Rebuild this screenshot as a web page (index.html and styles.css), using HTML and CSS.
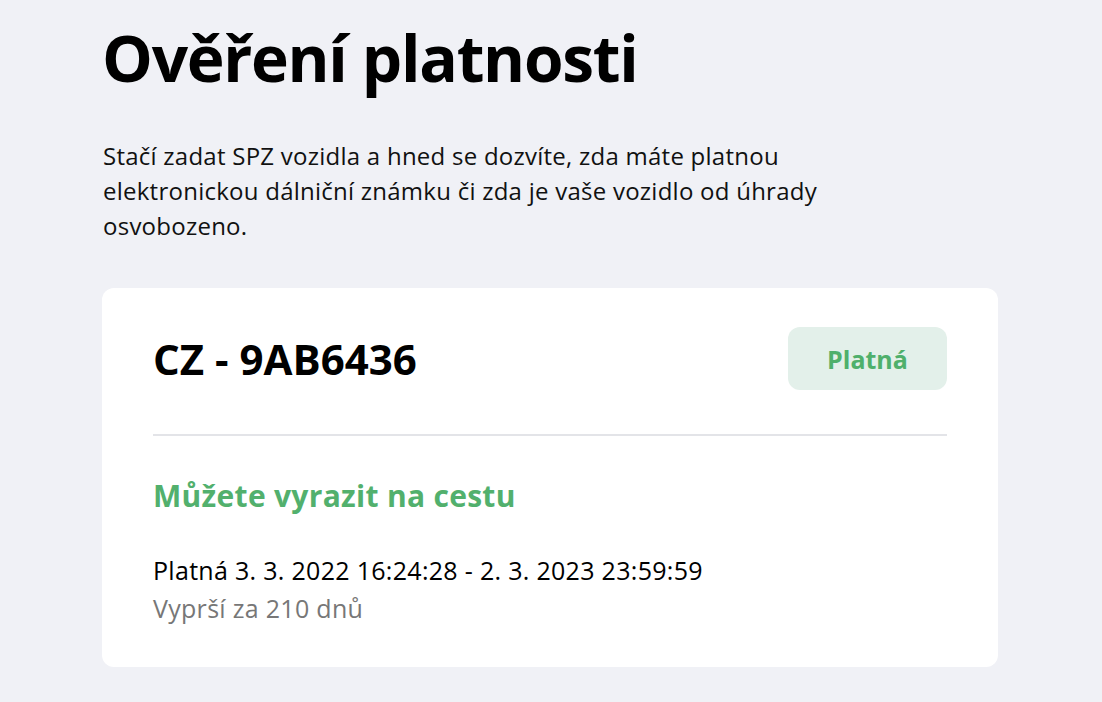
FILE: index.html
```html
<!DOCTYPE html>
<html lang="cs">
<head>
<meta charset="utf-8">
<title>Ověření platnosti</title>
<link rel="stylesheet" href="styles.css">
</head>
<body>
<main class="page">
  <h1 class="title">Ověření platnosti</h1>
  <p class="intro">Stačí zadat SPZ vozidla a hned se dozvíte, zda máte platnou elektronickou dálniční známku či zda je vaše vozidlo od úhrady osvobozeno.</p>
  <section class="card">
    <div class="card-head">
      <div class="plate">CZ - 9AB6436</div>
      <div class="badge">Platná</div>
    </div>
    <hr class="divider">
    <h2 class="status">Můžete vyrazit na cestu</h2>
    <p class="validity">Platná 3. 3. 2022 16:24:28 - 2. 3. 2023 23:59:59</p>
    <p class="expires">Vyprší za 210 dnů</p>
  </section>
</main>
</body>
</html>
```
FILE: styles.css
```css
html, body {
  margin: 0;
  padding: 0;
  background: #f0f1f6;
}
body {
  font-family: "Open Sans", "Noto Sans", sans-serif;
  color: #000;
}
.page {
  width: 896px;
  padding: 18px 0 0 102px;
}
.title {
  margin: 0;
  font-weight: 700;
  font-size: 64px;
  line-height: 80px;
  letter-spacing: -1.3px;
}
.intro {
  margin: 40px 0 0 1px;
  width: 770px;
  font-size: 24px;
  line-height: 35px;
  letter-spacing: 0.25px;
  color: #111;
}
.card {
  margin-top: 45px;
  background: #fff;
  border-radius: 12px;
  padding: 39px 51px 40px 51px;
}
.card-head {
  display: flex;
  justify-content: space-between;
  align-items: center;
}
.plate {
  font-weight: 700;
  font-size: 42px;
  line-height: 50px;
}
.badge {
  width: 159px;
  height: 63px;
  border-radius: 12px;
  background: #e3f0ea;
  color: #4fb06c;
  font-weight: 700;
  font-size: 25px;
  display: flex;
  align-items: center;
  justify-content: center;
}
.divider {
  border: 0;
  border-top: 2px solid #e3e4e8;
  margin: 44px 0 0;
}
.status {
  margin: 43px 0 0;
  font-size: 30px;
  font-weight: 700;
  line-height: 34px;
  letter-spacing: 0.3px;
  color: #52b06d;
}
.validity {
  margin: 38px 0 0;
  font-size: 25px;
  line-height: 38px;
  letter-spacing: 0.3px;
}
.expires {
  margin: 0;
  font-size: 25px;
  line-height: 38px;
  letter-spacing: 0.3px;
  color: #777;
}
```
